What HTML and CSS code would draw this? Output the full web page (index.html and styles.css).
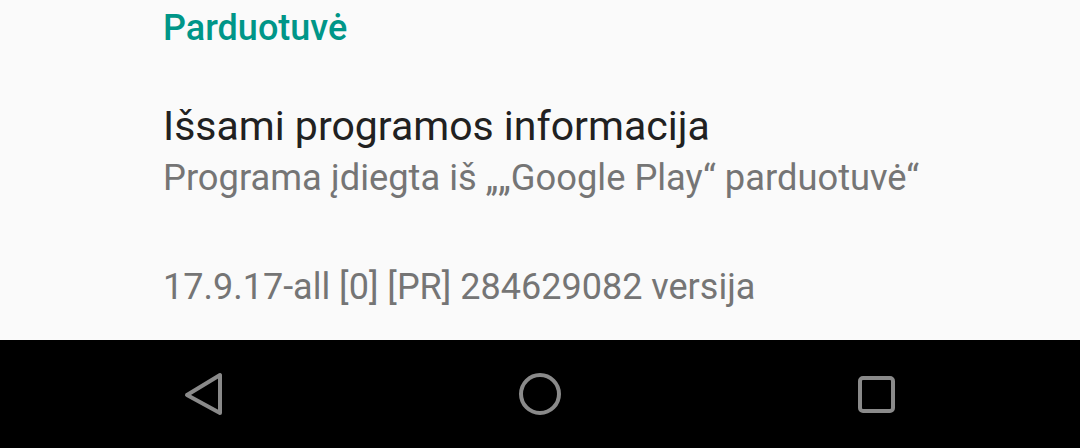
FILE: index.html
```html
<!DOCTYPE html>
<html>
<head>
    <title>Programos informacija</title>
    <link rel="stylesheet" href="styles.css">
</head>
<body>
    <!-- Settings list -->
    <div class="settings">
        <div class="category">Parduotuvė</div>

        <div class="pref">
            <div class="pref-title">Išsami programos informacija</div>
            <div class="pref-summary">Programa įdiegta iš „„Google Play“ parduotuvė“</div>
        </div>

        <div class="version">17.9.17-all [0] [PR] 284629082 versija</div>
    </div>

    <!-- Navigation bar -->
    <div class="navbar">
        <svg class="nav-icon" width="56" height="56" viewBox="0 0 56 56">
            <path d="M45 9 L45 47 L12 29 Z" fill="none" stroke="#8a8a8a" stroke-width="4" stroke-linejoin="round"/>
        </svg>
        <svg class="nav-icon" width="56" height="56" viewBox="0 0 56 56">
            <circle cx="28" cy="28" r="19" fill="none" stroke="#8a8a8a" stroke-width="4"/>
        </svg>
        <svg class="nav-icon" width="56" height="56" viewBox="0 0 56 56">
            <rect x="11" y="12" width="33" height="33" rx="3" fill="none" stroke="#8a8a8a" stroke-width="4"/>
        </svg>
    </div>
</body>
</html>
```

FILE: styles.css
```css
body {
    font-family: Roboto, "Noto Sans", sans-serif;
    margin: 0;
    background-color: #fafafa;
    width: 1080px;
    height: 448px;
    overflow: hidden;
}

/* Settings list */
.settings {
    height: 340px;
    padding-left: 163px;
    box-sizing: border-box;
}

.category {
    color: #009688;
    font-size: 36px;
    font-weight: 500;
    line-height: 48px;
    padding-top: 4px;
}

.pref {
    padding-top: 48px;
}

.pref-title {
    color: #212121;
    font-size: 41px;
    line-height: 52px;
}

.pref-summary {
    color: #757575;
    font-size: 36.3px;
    line-height: 52px;
}

.version {
    color: #757575;
    font-size: 36px;
    line-height: 52px;
    padding-top: 57px;
}

/* Navigation bar */
.navbar {
    height: 108px;
    background-color: #000;
    display: flex;
    align-items: center;
    justify-content: space-between;
    padding: 0 175px;
}

.nav-icon {
    display: block;
}
```
